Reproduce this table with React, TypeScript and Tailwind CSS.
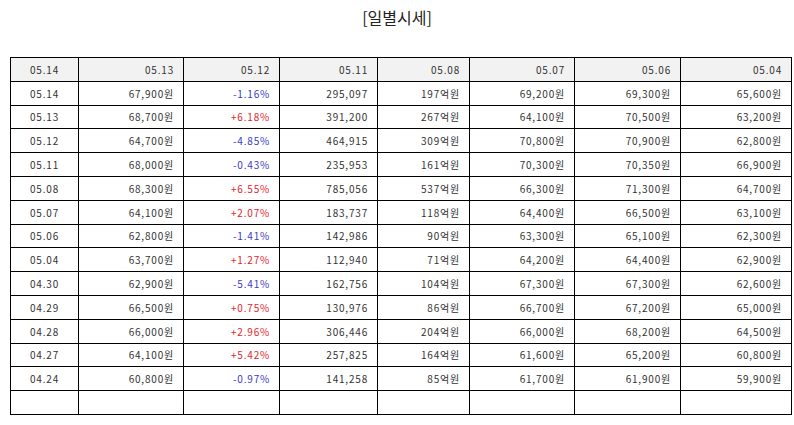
import React from "react";

const headers = ["05.14", "05.13", "05.12", "05.11", "05.08", "05.07", "05.06", "05.04"];

const rows: string[][] = [
  ["05.14", "67,900원", "-1.16%", "295,097", "197억원", "69,200원", "69,300원", "65,600원"],
  ["05.13", "68,700원", "+6.18%", "391,200", "267억원", "64,100원", "70,500원", "63,200원"],
  ["05.12", "64,700원", "-4.85%", "464,915", "309억원", "70,800원", "70,900원", "62,800원"],
  ["05.11", "68,000원", "-0.43%", "235,953", "161억원", "70,300원", "70,350원", "66,900원"],
  ["05.08", "68,300원", "+6.55%", "785,056", "537억원", "66,300원", "71,300원", "64,700원"],
  ["05.07", "64,100원", "+2.07%", "183,737", "118억원", "64,400원", "66,500원", "63,100원"],
  ["05.06", "62,800원", "-1.41%", "142,986", "90억원", "63,300원", "65,100원", "62,300원"],
  ["05.04", "63,700원", "+1.27%", "112,940", "71억원", "64,200원", "64,400원", "62,900원"],
  ["04.30", "62,900원", "-5.41%", "162,756", "104억원", "67,300원", "67,300원", "62,600원"],
  ["04.29", "66,500원", "+0.75%", "130,976", "86억원", "66,700원", "67,200원", "65,000원"],
  ["04.28", "66,000원", "+2.96%", "306,446", "204억원", "66,000원", "68,200원", "64,500원"],
  ["04.27", "64,100원", "+5.42%", "257,825", "164억원", "61,600원", "65,200원", "60,800원"],
  ["04.24", "60,800원", "-0.97%", "141,258", "85억원", "61,700원", "61,900원", "59,900원"],
];

const widths = ["w-[68px]", "w-[105px]", "w-[96px]", "w-[98px]", "w-[92px]", "w-[105px]", "w-[106px]", "w-[111px]"];

const changeColor = (v: string) => (v.startsWith("+") ? "text-[#e2262b]" : "text-[#3a3acb]");

export default function App() {
  return (
    <div
      className="w-[794px] h-[425px] bg-white text-[#333]"
      style={{ fontFamily: '"Noto Sans CJK KR", "Noto Sans", sans-serif' }}
    >
      <h2 className="pt-[5px] h-[57px] text-center text-[16px] leading-[24px] text-[#222]">[일별시세]</h2>
      <table className="ml-[10px] w-[781px] border-collapse table-fixed text-[10px] tracking-[0.8px]">
        <colgroup>
          {widths.map((w, i) => (
            <col key={i} className={w} />
          ))}
        </colgroup>
        <thead>
          <tr className="bg-[#f2f2f2]">
            {headers.map((h, i) => (
              <th
                key={i}
                className={`h-[23.8px] p-0 border border-black font-normal ${i === 0 ? "text-center" : "text-right pr-[9px]"}`}
              >
                {h}
              </th>
            ))}
          </tr>
        </thead>
        <tbody>
          {rows.map((r, ri) => (
            <tr key={ri}>
              {r.map((c, ci) => (
                <td
                  key={ci}
                  className={`h-[23.8px] p-0 border border-black ${ci === 0 ? "text-center" : "text-right pr-[9px]"} ${ci === 2 ? changeColor(c) : ""}`}
                >
                  {c}
                </td>
              ))}
            </tr>
          ))}
          <tr>
            {headers.map((_, i) => (
              <td key={i} className="h-[23.8px] p-0 border border-black" />
            ))}
          </tr>
        </tbody>
      </table>
    </div>
  );
}
